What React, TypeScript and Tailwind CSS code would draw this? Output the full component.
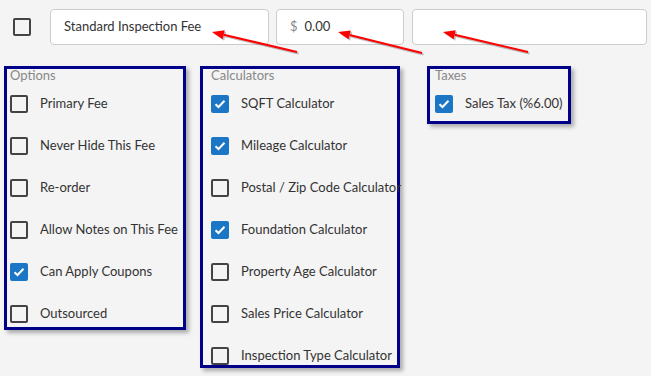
import React from 'react';

type Item = { label: string; checked?: boolean };

const options: Item[] = [
    { label: 'Primary Fee' },
    { label: 'Never Hide This Fee' },
    { label: 'Re-order' },
    { label: 'Allow Notes on This Fee' },
    { label: 'Can Apply Coupons', checked: true },
    { label: 'Outsourced' },
];

const calculators: Item[] = [
    { label: 'SQFT Calculator', checked: true },
    { label: 'Mileage Calculator', checked: true },
    { label: 'Postal / Zip Code Calculator' },
    { label: 'Foundation Calculator', checked: true },
    { label: 'Property Age Calculator' },
    { label: 'Sales Price Calculator' },
    { label: 'Inspection Type Calculator' },
];

function Check({ checked }: { checked?: boolean }) {
    if (checked) {
        return (
            <span className="flex h-[18px] w-[18px] shrink-0 items-center justify-center rounded-[2px] bg-[#1b77c5]">
                <svg width="12" height="10" viewBox="0 0 12 10" fill="none">
                    <path d="M1.5 5.2 4.5 8 10.5 1.8" stroke="#fff" strokeWidth="2" />
                </svg>
            </span>
        );
    }
    return <span className="block h-[18px] w-[18px] shrink-0 rounded-[2px] border-2 border-[#444]" />;
}

function Row({ item }: { item: Item }) {
    return (
        <div className="flex h-[42px] items-center gap-3 whitespace-nowrap">
            <Check checked={item.checked} />
            <span className="text-[13px] text-[#333]">{item.label}</span>
        </div>
    );
}

function Group({ title, items, className }: { title: string; items: Item[]; className: string }) {
    return (
        <div
            className={`shrink-0 border-[3px] border-[#000088] shadow-[3px_3px_4px_rgba(0,0,0,0.3)] ${className}`}
        >
            <div className="h-[14px] text-[13px] leading-[12px] text-[#888]">{title}</div>
            {items.map((it) => (
                <Row key={it.label} item={it} />
            ))}
        </div>
    );
}

function Arrow({ x1, y1, x2, y2 }: { x1: number; y1: number; x2: number; y2: number }) {
    const a = Math.atan2(y1 - y2, x1 - x2);
    const len = 12;
    const w = 4.5;
    const bx = x1 - Math.cos(a) * len;
    const by = y1 - Math.sin(a) * len;
    const px = -Math.sin(a) * w;
    const py = Math.cos(a) * w;
    const head = `${x1},${y1} ${bx + px},${by + py} ${bx - px},${by - py}`;
    return (
        <g>
            <g transform="translate(1.5 1.5)" opacity="0.25">
                <line x1={bx} y1={by} x2={x2} y2={y2} stroke="#000" strokeWidth="2" />
                <polygon points={head} fill="#000" />
            </g>
            <line x1={bx} y1={by} x2={x2} y2={y2} stroke="#f00" strokeWidth="2" />
            <polygon points={head} fill="#f00" />
        </g>
    );
}

export default function App() {
    return (
        <div
            className="relative h-[376px] w-[651px] overflow-hidden bg-[#f4f4f4]"
            style={{ fontFamily: 'Lato, "Open Sans", sans-serif' }}
        >
            <div className="flex items-center pt-[9px]">
                <div className="ml-[13px] mr-[19px] shrink-0">
                    <Check />
                </div>
                <div className="flex h-[36px] w-[219px] shrink-0 items-center rounded-[4px] border border-[#ccc] bg-white pl-[13px] text-[13px] text-[#333]">
                    Standard Inspection Fee
                </div>
                <div className="ml-[7px] flex h-[36px] w-[128px] shrink-0 items-center gap-[7px] rounded-[4px] border border-[#ccc] bg-white pl-[13px] text-[13px]">
                    <span className="text-[#888]">$</span>
                    <span className="text-[#333]">0.00</span>
                </div>
                <div className="ml-[8px] h-[36px] w-[235px] shrink-0 rounded-[4px] border border-[#ccc] bg-white" />
            </div>

            <div className="mt-[21px] flex items-start pl-[4px]">
                <Group title="Options" items={options} className="h-[264px] w-[182px] pl-[3px]" />
                <Group title="Calculators" items={calculators} className="ml-[14px] h-[302px] w-[200px] pl-[8px]" />
                <Group
                    title="Taxes"
                    items={[{ label: 'Sales Tax (%6.00)', checked: true }]}
                    className="ml-[27px] h-[58px] w-[144px] pl-[5px]"
                />
            </div>

            <svg className="pointer-events-none absolute left-0 top-0" width="651" height="376">
                <Arrow x1={212} y1={32} x2={297} y2={52} />
                <Arrow x1={338} y1={32} x2={422} y2={53} />
                <Arrow x1={443} y1={32} x2={528} y2={52} />
            </svg>
        </div>
    );
}
